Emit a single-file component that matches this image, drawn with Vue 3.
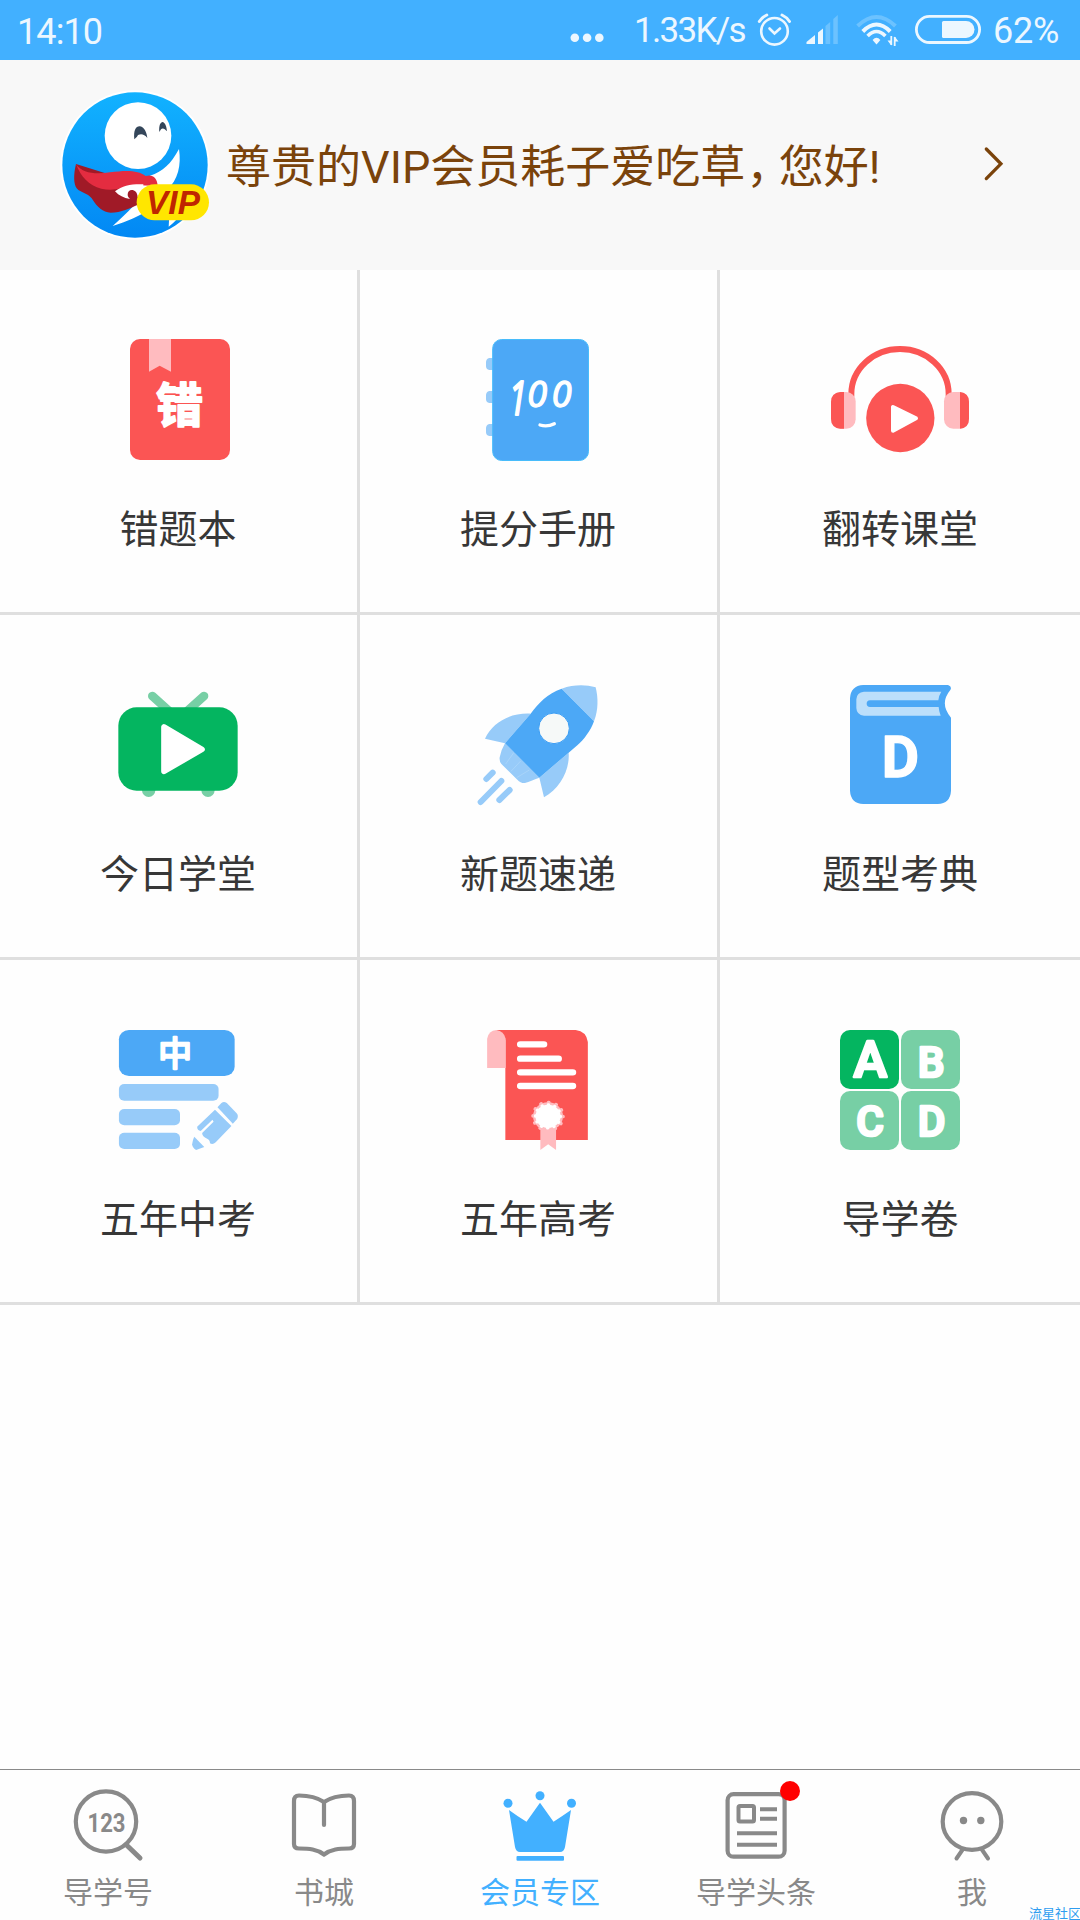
<script setup>
const cells = [
  { id: 'mistakes', label: '错题本', box: '318 6 432 432' },
  { id: 'handbook', label: '提分手册', box: '318 6 432 432' },
  { id: 'flipped', label: '翻转课堂', box: '324 6 432 432' },
  { id: 'today', label: '今日学堂', box: '318 21 432 432' },
  { id: 'rocket', label: '新题速递', box: '318 21 432 432' },
  { id: 'dictionary', label: '题型考典', box: '324 21 432 432' },
  { id: 'middle', label: '五年中考', box: '318 36 432 432' },
  { id: 'high', label: '五年高考', box: '318 36 432 432' },
  { id: 'papers', label: '导学卷', box: '624 36 432 432' },
]

const tabs = [
  { id: 'number', label: '导学号', box: '68 1784 80 80' },
  { id: 'books', label: '书城', box: '284 1784 80 80' },
  { id: 'vip', label: '会员专区', box: '500 1784 80 80', active: true },
  { id: 'news', label: '导学头条', box: '716 1784 80 80', dot: true },
  { id: 'me', label: '我', box: '932 1784 80 80' },
]
</script>

<template>
  <div class="screen">
    <header class="status">
      <span class="time">14:10</span>
      <div class="status-right">
        <svg class="dots" width="34" height="60" viewBox="570 0 34 60" fill="#ecf7ff">
          <circle cx="574.8" cy="37.7" r="4.3" /><circle cx="587.1" cy="37.7" r="4.3" /><circle cx="599.3" cy="37.7" r="4.3" />
        </svg>
        <span class="speed">1.33K/s</span>
        <svg width="238" height="60" viewBox="750 0 238 60" fill="none" stroke="#ecf7ff" stroke-linecap="round">
          <circle cx="774.5" cy="31.3" r="13.3" stroke-width="2.6" />
          <path d="M769.5 28.5l5 5 5.5-5" stroke-width="2.6" />
          <path d="M759.3 21.5q3-4.500 7.500-6.500M789.500 21.500q-3-4.500-7.500-6.500" stroke-width="3" />
          <g stroke="none" fill="#ecf7ff">
            <path d="M806.500 44v-2l8.500-7v9z" />
            <path d="M818 44V32.500l5-4V44z" />
            <path d="M825.500 44V26l4.700-4V44zM833.300 44V19l4.500-4V44z" fill="#6cc2ff" />
            <path d="M872.600 40q3.900-4.600 7.800 0l-3.900 4.400z" />
          </g>
          <g stroke-linecap="butt">
            <path d="M857.600 26q18.900-18 37.800 0" stroke="#6cc2ff" stroke-width="4" />
            <path d="M862.800 31.500q13.700-14 27.400 0" stroke-width="4" />
            <path d="M867.600 36q8.900-9 17.800 0" stroke-width="3.600" />
            <path d="M891.300 36v9M894.700 37v9" stroke-width="1.800" />
            <path d="M887.500 40.500l3.800 5v-5zM898.500 41.500l-3.800-5v5z" fill="#ecf7ff" stroke="none" />
          </g>
          <rect x="916.400" y="16.300" width="63.200" height="26.200" rx="13.100" stroke-width="2.800" />
          <path d="M943.500 21h22.500a8.500 8.500 0 0 1 0 17h-22.500q-1.500 0-1.500-1.500v-14q0-1.500 1.500-1.500z" fill="#ecf7ff" stroke="none" />
        </svg>
        <span class="percent">62%</span>
      </div>
    </header>

    <section class="member">
      <svg class="avatar" width="150" height="150" viewBox="30 30 450 450">
        <defs>
          <linearGradient id="sky" x1="0" y1="0" x2="0" y2="1">
            <stop offset="0" stop-color="#12b2ff" /><stop offset="1" stop-color="#0288f4" />
          </linearGradient>
        </defs>
        <circle cx="255" cy="255" r="224" fill="#fff" />
        <circle cx="255" cy="255" r="218" fill="url(#sky)" />
        <path d="M387 207C362 252 340 274 300 287L240 330C258 350 262 366 248 380C232 397 210 417 188 438C230 425 270 410 300 385L360 370L356 440C375 425 390 410 400 390L350 330C385 300 394 255 387 207Z" fill="#fff" />
        <circle cx="264" cy="167" r="100" fill="#fff" />
        <path d="M253 178C250 150 258 138 270 139C284 142 290 158 292 174C282 160 266 160 261 170ZM328 156C326 136 332 125 339 126C347 130 350 143 351 154C344 145 337 143 333 148Z" fill="#34465a" />
        <path d="M78 252C70 285 71 312 80 325C93 340 112 338 125 355C143 383 158 397 182 398C214 398 240 384 264 374L270 330L200 290Z" fill="#a01a27" />
        <path d="M78 252C96 281 138 283 180 277C228 270 264 270 287 288C307 282 322 292 323 318L250 315C215 326 185 334 154 326C116 316 92 290 78 252Z" fill="#e42c40" />
        <path d="M195 334C218 316 244 312 280 313V345L263 352C263 325 232 323 233 344C233 349 236 353 240 357C221 354 207 347 195 334Z" fill="#fff" />
        <rect x="260" y="313" width="217" height="108" rx="54" fill="#ffe600" />
        <text x="369" y="402" text-anchor="middle" textLength="162" class="vip">VIP</text>
      </svg>
      <p class="greeting">尊贵的VIP会员耗子爱吃草<span class="comma">，</span>您好!</p>
      <svg class="chevron" width="26" height="40" viewBox="980 145 26 40" fill="none" stroke="#7a430b" stroke-width="3.300" stroke-linecap="round">
        <path d="M986.300 149l14.600 14.800-14.600 14.800" />
      </svg>
    </section>

    <main class="grid">
      <div v-for="c in cells" :key="c.id" class="cell">
        <svg class="art" width="144" height="144" :viewBox="c.box">
          <g v-if="c.id === 'mistakes'">
            <rect x="390" y="57" width="300" height="363" rx="30" fill="#fb5554" />
            <path d="M447 57h66v98l-34-18-32 18z" fill="#ffbbbf" />
            <text x="539" y="306" text-anchor="middle" class="cjk wrong">错</text>
          </g>
          <g v-else-if="c.id === 'handbook'">
            <path d="M400 114h-12q-10 2-10 13v12q0 9 10 11h12zM400 213h-12q-10 2-10 13v12q0 9 10 11h12zM400 312h-12q-10 2-10 13v12q0 9 10 11h12z" fill="#97cbf9" />
            <rect x="398" y="58.500" width="287.500" height="363" rx="27" fill="#4ca8f6" stroke="#48bcfb" stroke-width="3" />
            <text x="446" y="285" textLength="54" lengthAdjust="spacingAndGlyphs" class="score one">1</text>
            <text x="502" y="260" class="score">0</text>
            <text x="575" y="260" class="score">0</text>
            <path d="M540 315q22 7 43-4" fill="none" stroke="#fff" stroke-width="10" stroke-linecap="round" />
          </g>
          <g v-else-if="c.id === 'flipped'">
            <path d="M394 230v-8a146 135 0 0 1 292 0v8" fill="none" stroke="#fb5554" stroke-width="18" />
            <rect x="333" y="216" width="74" height="110" rx="28" fill="#ffbbbf" />
            <path d="M372 216v110h-11q-28-3-28-30v-50q0-27 28-30z" fill="#fb5554" />
            <rect x="672" y="216" width="75" height="110" rx="28" fill="#ffbbbf" />
            <path d="M720 216q27 3 27 30v50q0 27-27 30z" fill="#fb5554" />
            <circle cx="541" cy="294" r="102.500" fill="#fb5554" />
            <path d="M519 261v71l69-37z" fill="#fff" stroke="#fff" stroke-width="12" stroke-linejoin="round" />
          </g>
          <g v-else-if="c.id === 'today'">
            <path d="M457 108l50 45M612 108l-50 45" stroke="#77cfa5" stroke-width="26" stroke-linecap="round" />
            <circle cx="446" cy="391" r="20" fill="#77cfa5" /><circle cx="624" cy="391" r="20" fill="#77cfa5" />
            <rect x="355" y="142" width="358" height="250" rx="55" fill="#04b560" />
            <path d="M492 201v133l114-66z" fill="#fff" stroke="#fff" stroke-width="17" stroke-linejoin="round" />
          </g>
          <g v-else-if="c.id === 'rocket'">
            <g fill="#97cbf9">
              <path d="M605 86C640 74 675 73 707 82C715 115 715 150 702 184Z" />
              <path d="M512 161C450 158 399 187 375 236L435 250ZM626 278C630 330 600 385 552 412L538 353Z" />
              <path d="M435 250L538 353C520 358 508 366 495 369Q482 370 472 359L428 316Q417 306 419 292Q423 270 435 250Z" />
            </g>
            <path d="M462 277L437 312M482 303L453 334M508 330L470 353" stroke="#a8d4fa" stroke-width="3" />
            <path d="M605 86L702 184C692 212 672 239 652 256L626 278L538 353L435 250L512 161C536 129 562 100 605 86Z" fill="#4ca8f6" />
            <circle cx="582" cy="205" r="46" fill="#f6f9f8" stroke="#399df5" stroke-width="3" />
            <path d="M398 338L379 357M424 363L362 426M449 390L418 420" stroke="#97cbf9" stroke-width="18" stroke-linecap="round" />
          </g>
          <g v-else-if="c.id === 'dictionary'">
            <path d="M430 75H684Q697 79 691 90Q657 131 693 173V392Q691 430 653 432H430Q392 430 390 392V115Q392 77 430 75Z" fill="#4ca8f6" />
            <path d="M432 95H664Q656 107 655 121H450Q440 122 440 131Q440 140 450 141H656Q657 155 662 167H432Q410 165 409 144V118Q410 97 432 95Z" fill="#bcdffb" />
            <text x="541" y="350" text-anchor="middle" class="letter big">D</text>
          </g>
          <g v-else-if="c.id === 'middle'">
            <g transform="translate(180) scale(1.0714 1)">
              <rect x="165" y="90" width="324" height="138" rx="28" fill="#4ca8f6" />
              <g fill="#97cbf9">
                <rect x="165" y="252" width="279" height="50" rx="15" />
                <rect x="165" y="327" width="171" height="49" rx="15" />
                <rect x="165" y="398" width="171" height="49" rx="15" />
                <path d="M441 322L452 309Q459 303 467 309L494 339Q501 347 496 357L484 371Z" />
                <path d="M434 329L480 378L436 427Q428 435 420 430Q420 419 412 416Q398 410 398 399L430 365L427 359L394 393Q384 391 384 380Z" />
                <path d="M376 410L404 441L381 450Q370 443 370 433Q371 420 376 410Z" />
              </g>
            </g>
            <text x="525" y="199" text-anchor="middle" class="cjk zhong">中</text>
          </g>
          <g v-else-if="c.id === 'high'" transform="translate(-900) scale(1.0714 1)">
            <path d="M1222 90H1444Q1474 94 1478 126V420H1247V120Z" fill="#fb5554" />
            <path d="M1196 204V116Q1200 92 1222 90Q1243 93 1248 116V204Z" fill="#ffbbbf" />
            <path d="M1289 133h66M1289 176h107M1289 217h147M1289 258h147" stroke="#fff" stroke-width="19" stroke-linecap="round" />
            <path d="M1345 380h44v70l-22-17-22 17z" fill="#ffbbbf" />
            <circle cx="1366.500" cy="349" r="42" fill="#ffbbbf" stroke="#ffbbbf" stroke-width="10" stroke-dasharray="1 21" stroke-linecap="round" />
            <circle cx="1366.500" cy="349" r="35" fill="#fff" stroke="#fff" stroke-width="9" stroke-dasharray="1 17.300" stroke-linecap="round" />
          </g>
          <g v-else>
            <rect x="660" y="90" width="177" height="177" rx="30" fill="#04b560" />
            <g fill="#77cfa5">
              <rect x="843" y="90" width="177" height="177" rx="30" />
              <rect x="660" y="273" width="177" height="177" rx="30" />
              <rect x="843" y="273" width="177" height="177" rx="30" />
            </g>
            <g text-anchor="middle">
              <text x="751" y="231" class="letter a">A</text>
              <text x="933" y="230" class="letter">B</text>
              <text x="750" y="407" class="letter">C</text>
              <text x="935" y="407" class="letter">D</text>
            </g>
          </g>
        </svg>
        <span class="label">{{ c.label }}</span>
      </div>
    </main>

    <nav class="tabs">
      <div v-for="t in tabs" :key="t.id" class="tab" :class="{ active: t.active }">
        <svg width="80" height="80" :viewBox="t.box" fill="none" stroke="#898989" stroke-width="4.200">
          <g v-if="t.id === 'number'">
            <circle cx="106" cy="1821.500" r="30.200" />
            <path d="M127 1845.500l13 12.500" stroke-width="5" stroke-linecap="round" />
            <text x="106.500" y="1831.500" text-anchor="middle" textLength="38" lengthAdjust="spacingAndGlyphs" class="digits">123</text>
          </g>
          <g v-else-if="t.id === 'books'" stroke-linejoin="round">
            <path d="M324 1802C315 1796 307 1795.500 299 1795.500Q294 1795.500 294 1801V1844Q294 1848.500 299 1848.500C309 1848.500 317 1849 324 1854.500C331 1849 339 1848.500 349 1848.500Q354 1848.500 354 1844V1801Q354 1795.500 349 1795.500C341 1795.500 333 1796 324 1802Z" />
            <path d="M324 1802v23" stroke-linecap="round" />
          </g>
          <g v-else-if="t.id === 'vip'" fill="#42b0ff" stroke="none">
            <circle cx="540" cy="1795.700" r="4.500" /><circle cx="508" cy="1803.300" r="4.500" /><circle cx="571.500" cy="1803.300" r="4.500" />
            <path d="M509 1810q8 6 17.500 11.700l13.500-19 13.500 19q9-5.700 17.500-11.700l-6 37q-1 5-5 5h-40q-4 0-5-5z" />
            <rect x="516.500" y="1856" width="47.500" height="4.800" rx="1" />
          </g>
          <g v-else-if="t.id === 'news'">
            <rect x="727.600" y="1794.200" width="57" height="62.500" rx="6" />
            <rect x="738.500" y="1806" width="15.500" height="15.500" rx="1.500" stroke-width="4" />
            <path d="M760 1809.200h17M760 1818.700h17M737 1833.300h40M737 1844.700h40" stroke-width="4" />
          </g>
          <g v-else>
            <ellipse cx="972" cy="1821.500" rx="29.300" ry="28.300" />
            <circle cx="963.500" cy="1820.500" r="3.700" fill="#898989" stroke="none" />
            <circle cx="980.800" cy="1820.500" r="3.700" fill="#898989" stroke="none" />
            <path d="M963 1849l-6.500 9.500M981.500 1849l6.500 9.500" stroke-linecap="round" stroke-width="4" />
          </g>
        </svg>
        <i v-if="t.dot" class="dot"></i>
        <span class="tab-label">{{ t.label }}</span>
      </div>
      <span class="mark">流星社区</span>
    </nav>
  </div>
</template>

<style>
body { margin: 0; background: #fff; }
</style>

<style scoped>
.screen {
  width: 1080px;
  height: 1920px;
  display: flex;
  flex-direction: column;
  overflow: hidden;
  background: #fefefe;
  font-family: Roboto, "Noto Sans CJK SC", sans-serif;
}
svg { display: block; flex: none; }
.status {
  height: 60px;
  display: flex;
  align-items: center;
  justify-content: space-between;
  padding: 0 18px 0 17px;
  background: #42b0ff;
  color: #ecf7ff;
  font-size: 36px;
  line-height: 60px;
  white-space: nowrap;
}
.time { padding-top: 3px; letter-spacing: -0.9px; }
.status-right { display: flex; align-items: center; }
.speed { width: 116px; margin-left: 30px; padding-top: 2px; font-size: 35px; letter-spacing: -1.7px; }
.percent { width: 69px; margin-left: 5px; padding-top: 2px; letter-spacing: -0.2px; }
.member {
  height: 210px;
  display: flex;
  align-items: center;
  padding: 0 74px 0 60px;
  box-sizing: border-box;
  background: #f8f8f8;
}
.vip { font: italic 700 100px "Liberation Sans", sans-serif; fill: #bf2600; }
.greeting {
  flex: 1;
  margin: 0 0 0 16px;
  padding-top: 6px;
  color: #7a430b;
  font-size: 45px;
  line-height: 66px;
  white-space: nowrap;
}
.comma { margin: 0 10px 0 1px; font-feature-settings: "halt"; }
.grid { display: grid; grid-template-columns: repeat(3, 360px); grid-auto-rows: 345px; }
.cell {
  display: flex;
  flex-direction: column;
  align-items: center;
  padding: 52px 1px 0 0;
  box-sizing: border-box;
  border-right: 3px solid #dfdfdf;
  border-bottom: 3px solid #dfdfdf;
}
.cell:nth-child(3n) { border-right: 0; padding-right: 0; }
.label { margin-top: 35px; color: #373737; font-size: 39px; line-height: 58px; }
.cjk { font-family: "Noto Sans CJK SC", sans-serif; fill: #fff; stroke: #fff; stroke-linejoin: round; }
.wrong { font-size: 140px; font-weight: 700; stroke-width: 6px; }
.zhong { font-size: 101px; font-weight: 400; stroke-width: 7px; }
.score { font: italic 500 108px "Open Sans", sans-serif; fill: #fff; stroke: #fff; stroke-width: 4px; stroke-linejoin: round; }
.one { font-size: 144px; stroke-width: 6px; }
.letter { font: 500 127px Roboto, sans-serif; fill: #fff; stroke: #fff; stroke-width: 8px; stroke-linejoin: round; }
.letter.a { font-size: 152px; }
.letter.big { font: 700 172px Roboto, sans-serif; stroke-width: 4px; }
.tabs {
  position: relative;
  display: flex;
  height: 151px;
  margin-top: auto;
  box-sizing: border-box;
  border-top: 1px solid #898989;
}
.tab {
  position: relative;
  width: 216px;
  display: flex;
  flex-direction: column;
  align-items: center;
  padding-top: 14px;
  color: #898989;
}
.active { color: #42b0ff; }
.tab-label { margin-top: 7px; font-size: 30px; line-height: 44px; }
.digits { font: 700 25px Roboto, sans-serif; fill: #898989; stroke: none; }
.dot {
  position: absolute;
  left: 132px;
  top: 11px;
  width: 20px;
  height: 20px;
  border-radius: 50%;
  background: #f00;
}
.mark {
  position: absolute;
  right: -1px;
  bottom: -3px;
  color: #2f9df0;
  font-size: 13px;
  line-height: 18px;
  white-space: nowrap;
}
</style>
